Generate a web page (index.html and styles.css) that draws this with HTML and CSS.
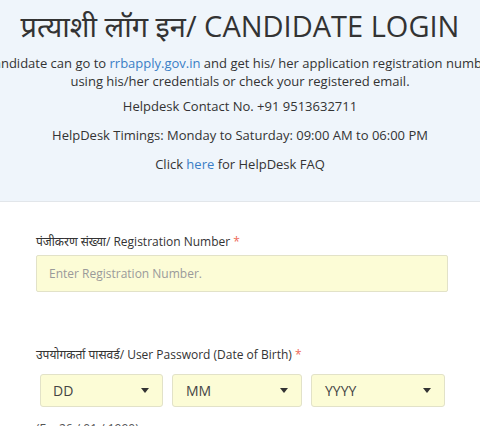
FILE: index.html
```html
<!DOCTYPE html>
<html lang="hi">
<head>
<meta charset="utf-8">
<title>Candidate Login</title>
<link rel="stylesheet" href="styles.css">
</head>
<body>
<div class="page">
  <header class="info">
    <h1 class="title">प्रत्याशी लॉग इन/ CANDIDATE LOGIN</h1>
    <div class="intro">
      <span class="line">Candidate can go to <a class="link" href="#">rrbapply.gov.in</a> and get his/ her application registration number</span>
      <span class="line">using his/her credentials or check your registered email.</span>
    </div>
    <p class="note note-first">Helpdesk Contact No. +91 9513632711</p>
    <p class="note">HelpDesk Timings: Monday to Saturday: 09:00 AM to 06:00 PM</p>
    <p class="note">Click <a class="link" href="#">here</a> for HelpDesk FAQ</p>
  </header>
  <form class="form">
    <label class="label" for="reg">पंजीकरण संख्या/ Registration Number <span class="req">*</span></label>
    <input class="field" id="reg" type="text" placeholder="Enter Registration Number.">
    <div class="label label-dob">उपयोगकर्ता पासवर्ड/ User Password (Date of Birth) <span class="req">*</span></div>
    <div class="dob">
      <div class="select sel-dd"><span>DD</span><svg class="caret" width="8" height="5" viewBox="0 0 8 5"><path d="M0 0H8L4 5Z" fill="#333"/></svg></div>
      <div class="select sel-mm"><span>MM</span><svg class="caret" width="8" height="5" viewBox="0 0 8 5"><path d="M0 0H8L4 5Z" fill="#333"/></svg></div>
      <div class="select sel-yy"><span>YYYY</span><svg class="caret" width="8" height="5" viewBox="0 0 8 5"><path d="M0 0H8L4 5Z" fill="#333"/></svg></div>
    </div>
    <div class="hint">(Eg: 26 / 01 / 1990)</div>
  </form>
</div>
</body>
</html>
```

FILE: styles.css
```css
html, body {
  margin: 0;
  padding: 0;
  background: #ffffff;
}
body {
  font-family: "Open Sans", "Noto Sans Devanagari", "Noto Sans", "DejaVu Sans", sans-serif;
  color: #333333;
  overflow: hidden;
}
.page {
  width: 480px;
}
.info {
  background: #eff5fb;
  border-bottom: 1px solid #e2e6ea;
  padding: 10px 0 27px;
  display: flex;
  flex-direction: column;
  align-items: center;
}
.title {
  margin: 0;
  font-size: 29px;
  font-weight: 400;
  line-height: 32px;
  color: #333333;
  white-space: nowrap;
}
.intro {
  margin-top: 12px;
  display: flex;
  flex-direction: column;
  align-items: center;
  font-size: 13px;
  line-height: 18px;
}
.line {
  white-space: nowrap;
}
.link {
  color: #3a7ec6;
  text-decoration: none;
}
.note {
  margin: 9px 0 0;
  font-size: 13px;
  line-height: 20px;
  white-space: nowrap;
}
.note-first {
  margin-top: 6px;
}
.form {
  padding: 31px 32px 0 36px;
  display: flex;
  flex-direction: column;
  align-items: flex-start;
}
.label {
  font-size: 12px;
  line-height: 18px;
  color: #333333;
}
.req {
  color: #ee6a5a;
}
.field {
  box-sizing: border-box;
  margin-top: 4px;
  width: 412px;
  height: 37px;
  padding: 0 12px;
  background: #fcfcd6;
  border: 1px solid #e2e2c8;
  border-radius: 2px;
  font-family: inherit;
  font-size: 12px;
  color: #555555;
  outline: none;
}
.field::placeholder {
  color: #9a9a9a;
}
.label-dob {
  margin-top: 54px;
}
.dob {
  margin-top: 10px;
  margin-left: 4px;
  display: flex;
  gap: 9px;
}
.select {
  box-sizing: border-box;
  height: 33px;
  display: flex;
  align-items: center;
  justify-content: space-between;
  padding: 0 13px 0 12px;
  background: #fcfcd6;
  border: 1px solid #e2e2c8;
  border-radius: 3px;
  font-size: 14px;
  color: #444444;
}
.sel-dd { width: 123px; }
.sel-mm { width: 130px; }
.sel-yy { width: 134px; }
.sel-mm span, .sel-yy span { padding-left: 1px; }
.caret {
  display: block;
}
.hint {
  margin-top: 13px;
  font-size: 12px;
  line-height: 18px;
  color: #555555;
}
```
